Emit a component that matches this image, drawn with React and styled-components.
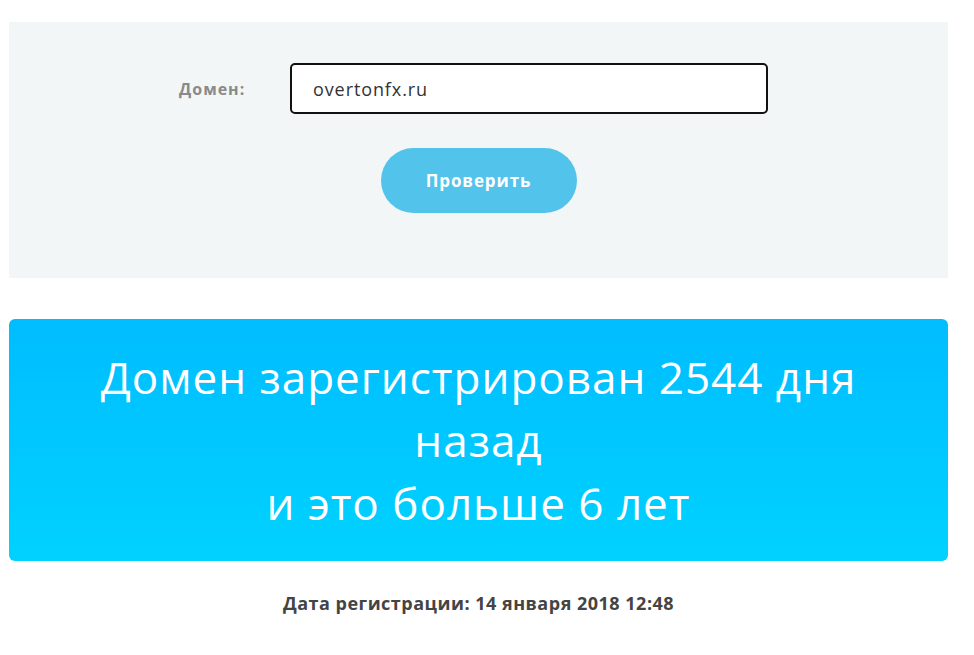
import React from 'react';
import styled, { createGlobalStyle } from 'styled-components';

const GlobalStyle = createGlobalStyle`
  html, body {
    margin: 0;
    padding: 0;
    background: #ffffff;
    font-family: "Open Sans", "Noto Sans", sans-serif;
  }
`;

const Page = styled.main`
  width: 939px;
  margin-left: 9px;
  padding-top: 22px;
`;

const CheckForm = styled.section`
  background-color: #f3f6f7;
  height: 256px;
  box-sizing: border-box;
  padding-top: 41px;
  display: flex;
  flex-direction: column;
  align-items: center;
`;

const Row = styled.div`
  display: flex;
  align-items: center;
  margin-right: 10px;
`;

const Label = styled.label`
  width: 111px;
  color: #8a8a8a;
  font-weight: 700;
  font-size: 16px;
  letter-spacing: 1px;
`;

const Input = styled.input`
  width: 478px;
  height: 51px;
  box-sizing: border-box;
  border: 2px solid #111;
  border-radius: 5px;
  padding: 0 21px;
  font-family: inherit;
  font-size: 18px;
  letter-spacing: 0.9px;
  color: #333;
  background: #fff;
  outline: none;
`;

const Button = styled.button`
  margin-top: 34px;
  width: 196px;
  height: 65px;
  border: none;
  border-radius: 33px;
  background-color: #52c3eb;
  color: #fff;
  font-family: inherit;
  font-weight: 700;
  font-size: 17px;
  letter-spacing: 0.9px;
  cursor: pointer;
`;

const Result = styled.section`
  margin-top: 41px;
  height: 242px;
  box-sizing: border-box;
  border-radius: 6px;
  background: linear-gradient(180deg, #00bdff 0%, #00d2ff 100%);
  color: #fff;
  display: flex;
  align-items: center;
  justify-content: center;
  text-align: center;
  padding: 0 80px;
`;

const ResultText = styled.h2`
  margin: 0;
  font-weight: 400;
  font-size: 44px;
  letter-spacing: 1px;
  line-height: 63px;
`;

const RegDate = styled.p`
  margin: 30px 0 0;
  text-align: center;
  font-weight: 700;
  font-size: 18px;
  letter-spacing: 0.5px;
  color: #444;
`;

const App = () => {
  return (
    <Page>
      <GlobalStyle />
      <CheckForm>
        <Row>
          <Label htmlFor="domain">Домен:</Label>
          <Input id="domain" defaultValue="overtonfx.ru" />
        </Row>
        <Button>Проверить</Button>
      </CheckForm>
      <Result>
        <ResultText>
          Домен зарегистрирован 2544 дня назад
          <br />
          и это больше 6 лет
        </ResultText>
      </Result>
      <RegDate>Дата регистрации: 14 января 2018 12:48</RegDate>
    </Page>
  );
};

export default App;
